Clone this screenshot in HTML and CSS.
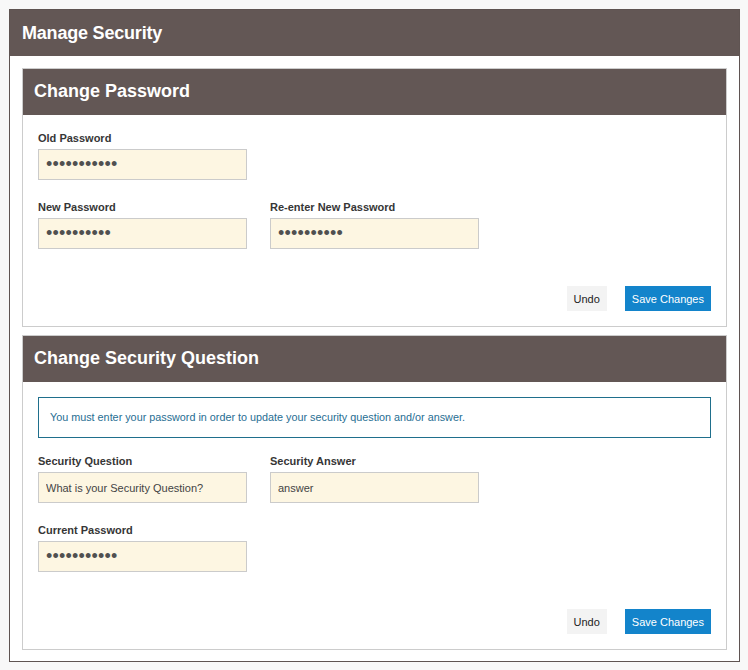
FILE: index.html
```html
<!DOCTYPE html>
<html lang="en">
<head>
<meta charset="utf-8">
<title>Manage Security</title>
<link rel="stylesheet" href="styles.css">
</head>
<body>
<div class="page">
  <div class="page-header">Manage Security</div>
  <div class="page-body">
    <section class="card">
      <div class="card-header">Change Password</div>
      <div class="card-body">
        <div class="field-row">
          <div class="field">
            <label class="field-label">Old Password</label>
            <input class="field-input field-pass" type="password" value="oldpassword">
          </div>
        </div>
        <div class="field-row">
          <div class="field">
            <label class="field-label">New Password</label>
            <input class="field-input field-pass" type="password" value="newpasswor">
          </div>
          <div class="field">
            <label class="field-label">Re-enter New Password</label>
            <input class="field-input field-pass" type="password" value="newpasswor">
          </div>
        </div>
        <div class="actions">
          <button class="btn btn-undo" type="button">Undo</button>
          <button class="btn btn-save" type="button">Save Changes</button>
        </div>
      </div>
    </section>
    <section class="card">
      <div class="card-header">Change Security Question</div>
      <div class="card-body card-body-notice">
        <div class="notice">You must enter your password in order to update your security question and/or answer.</div>
        <div class="field-row">
          <div class="field">
            <label class="field-label">Security Question</label>
            <input class="field-input" type="text" value="What is your Security Question?">
          </div>
          <div class="field">
            <label class="field-label">Security Answer</label>
            <input class="field-input" type="text" value="answer">
          </div>
        </div>
        <div class="field-row">
          <div class="field">
            <label class="field-label">Current Password</label>
            <input class="field-input field-pass" type="password" value="curpassword">
          </div>
        </div>
        <div class="actions">
          <button class="btn btn-undo" type="button">Undo</button>
          <button class="btn btn-save" type="button">Save Changes</button>
        </div>
      </div>
    </section>
  </div>
</div>
</body>
</html>
```

FILE: styles.css
```css
* { box-sizing: border-box; }

body {
  margin: 0;
  background: #f8f8f8;
  font-family: "Liberation Sans", Arial, sans-serif;
}

.page {
  margin: 9px 0 0 9px;
  width: 731px;
  border: 1px solid #5f5452;
  background: #ffffff;
}

.page-header {
  height: 46px;
  line-height: 46px;
  padding-left: 12px;
  background: #635755;
  color: #ffffff;
  font-size: 18px;
  font-weight: bold;
  letter-spacing: -0.2px;
}

.page-body {
  padding: 12px 12px 11px;
}

.card {
  border: 1px solid #cccccc;
  background: #ffffff;
}

.card + .card {
  margin-top: 8px;
}

.card-header {
  height: 46px;
  line-height: 45px;
  padding-left: 11px;
  background: #635755;
  color: #ffffff;
  font-size: 18px;
  font-weight: bold;
}

.card-body {
  padding: 16px 15px 15px;
}

.card-body-notice {
  padding-top: 15px;
}

.notice {
  height: 41px;
  line-height: 39px;
  padding: 0 11px;
  border: 1px solid #1f6f8c;
  color: #276e92;
  font-size: 10.8px;
  margin-bottom: 16px;
}

.field-row {
  display: grid;
  grid-template-columns: 209px 209px;
  column-gap: 23px;
}

.field-row + .field-row {
  margin-top: 20px;
}

.field {
  display: flex;
  flex-direction: column;
}

.field-label {
  display: block;
  font-size: 11px;
  line-height: 15px;
  font-weight: bold;
  color: #363636;
  margin-bottom: 3px;
}

.field-input {
  width: 209px;
  height: 31px;
  margin: 0;
  padding: 0 7px;
  border: 1px solid #cbcbcb;
  border-radius: 0;
  background: #fdf6e2;
  color: #444444;
  font-family: "Liberation Sans", Arial, sans-serif;
  font-size: 11px;
  outline: none;
}

.field-pass {
  font-size: 18px;
  letter-spacing: 0.2px;
  color: #505050;
}

.actions {
  margin-top: 37px;
  display: flex;
  justify-content: flex-end;
  gap: 18px;
}

.btn {
  height: 25px;
  padding: 0 7px;
  border: none;
  border-radius: 0;
  font-family: "Liberation Sans", Arial, sans-serif;
  font-size: 11px;
  cursor: pointer;
}

.btn-undo {
  background: #f3f3f3;
  color: #222222;
}

.btn-save {
  background: #1384cb;
  color: #ffffff;
}
```
